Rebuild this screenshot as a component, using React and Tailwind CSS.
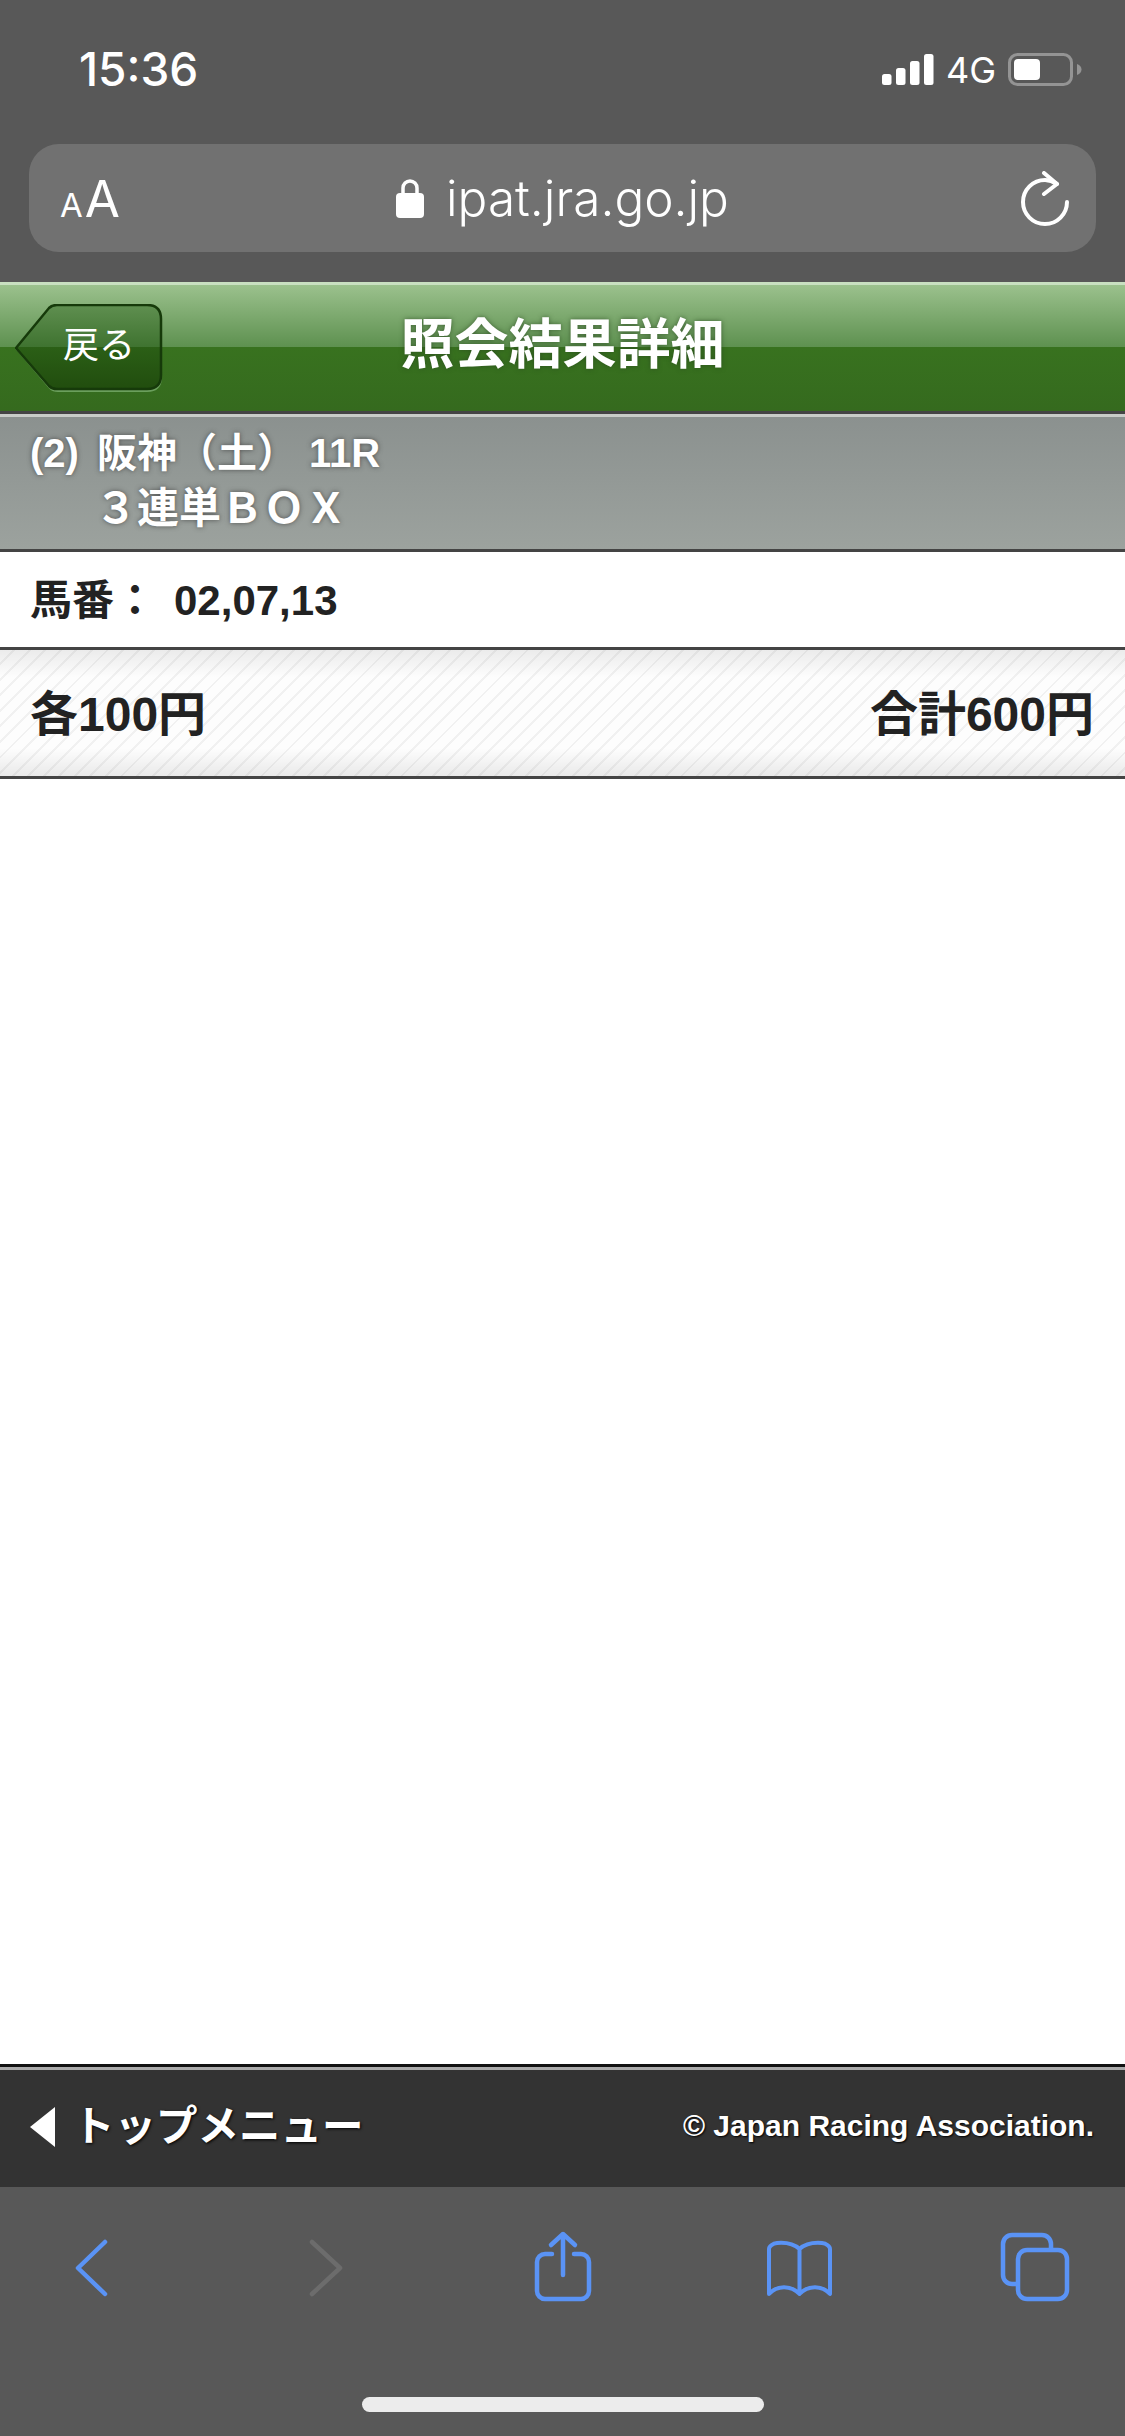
const jpFont = "font-['Liberation_Sans','Noto_Sans_CJK_JP',sans-serif]";

const SignalIcon = () => (
  <svg width="52" height="32" viewBox="0 0 52 32" fill="#fff">
    <rect x="0" y="20" width="9.500" height="11" rx="2.500" />
    <rect x="14" y="14" width="9.500" height="17" rx="2.500" />
    <rect x="28" y="7" width="9.500" height="24" rx="2.500" />
    <rect x="42" y="0" width="9.500" height="31" rx="2.500" />
  </svg>
);

const BatteryIcon = () => (
  <svg width="74" height="34" viewBox="0 0 74 34" fill="none">
    <rect x="1.500" y="1.500" width="62" height="30" rx="8" stroke="#949494" strokeWidth="3" />
    <rect x="6" y="6" width="26" height="21" rx="4" fill="#fff" />
    <path d="M69 11c3 1 4.500 3 4.500 5.500S72 21 69 22z" fill="#949494" />
  </svg>
);

const ReloadIcon = () => (
  <svg width="48" height="56" viewBox="0 0 48 56" fill="none" stroke="#fff" strokeWidth="4" strokeLinecap="round" strokeLinejoin="round">
    <path d="M46 31a22 22 0 1 1-22-22q6 0 12 4" />
    <path d="M23 2L36 13L23 23" />
  </svg>
);

const BackShape = () => (
  <svg className="absolute left-0 top-0" width="150" height="92" viewBox="0 0 150 92">
    <defs>
      <linearGradient id="backFill" x1="0" y1="0" x2="0" y2="1">
        <stop offset="0" stopColor="#5f8f50" />
        <stop offset="0.5" stopColor="#3f7330" />
        <stop offset="0.5" stopColor="#2b5f16" />
        <stop offset="1" stopColor="#214d0e" />
      </linearGradient>
    </defs>
    <path d="M1 46L35 6Q38 3 43 3H132Q146 3 146 17V73Q146 87 132 87H43Q38 87 35 84L1 44" fill="none" stroke="#6b9f5c" strokeWidth="2" />
    <path d="M1 44L34 4Q37 1 42 1H132Q146 1 146 15V71Q146 85 132 85H42Q37 85 34 82Z" fill="url(#backFill)" stroke="#163a0a" strokeWidth="2.500" />
  </svg>
);

const BLUE = "#5a93f5";

const ToolbarIcons = () => (
  <div className="flex justify-between px-[50px] pt-[40px]">
    <svg width="80" height="80" viewBox="0 0 80 80" fill="none" stroke={BLUE} strokeWidth="4.500" strokeLinecap="round" strokeLinejoin="round">
      <path d="M55 15L28 41L55 67" />
    </svg>
    <svg width="80" height="80" viewBox="0 0 80 80" fill="none" stroke="#6c6c6c" strokeWidth="4.500" strokeLinecap="round" strokeLinejoin="round">
      <path d="M26 15L54 41L26 67" />
    </svg>
    <svg width="80" height="80" viewBox="0 0 80 80" fill="none" stroke={BLUE} strokeWidth="4.500" strokeLinecap="round" strokeLinejoin="round">
      <path d="M29 27H22a8 8 0 0 0-8 8V64a8 8 0 0 0 8 8H58a8 8 0 0 0 8-8V35a8 8 0 0 0-8-8H51" />
      <path d="M40 48V7M28 18L40 7L52 18" />
    </svg>
    <svg width="80" height="80" viewBox="0 0 80 80" fill="none" stroke={BLUE} strokeWidth="4" strokeLinecap="round" strokeLinejoin="round">
      <path d="M40.500 22C34 16 24 15.500 18 16C14 16.500 10 19 10 22V67C18 58 32 58 40.500 67C49 58 63 58 71 67V22C71 19 67 16.500 63 16C57 15.500 47 16 40.500 22V67" />
    </svg>
    <svg width="80" height="80" viewBox="0 0 80 80" fill="none" stroke={BLUE} strokeWidth="4.500" strokeLinecap="round" strokeLinejoin="round">
      <path d="M21 57H17a9 9 0 0 1-9-9V17a9 9 0 0 1 9-9H47a9 9 0 0 1 9 9V21" />
      <rect x="23" y="23" width="49" height="49" rx="9" />
    </svg>
  </div>
);

export default function App() {
  return (
    <div className={`flex h-[2436px] w-[1125px] flex-col overflow-hidden bg-white ${jpFont}`}>
      {/* safari top chrome */}
      <div className="h-[282px] shrink-0 bg-[#585858] font-['Inter',sans-serif] text-white">
        <div className="flex h-[144px] items-start justify-between pl-[79px] pr-[43px] pt-[44px]">
          <span className="text-[46px] font-medium leading-[50px]">15:36</span>
          <div className="flex items-center pt-[8px]">
            <SignalIcon />
            <span className="ml-[12px] text-[36px] leading-[36px]">4G</span>
            <span className="ml-[12px]"><BatteryIcon /></span>
          </div>
        </div>
        <div className="mx-[29px] flex h-[108px] items-center justify-between rounded-[30px] bg-[#717171] pl-[31px] pr-[27px]">
          <div className="flex w-[60px] items-baseline gap-[2px]">
            <span className="text-[33px] leading-none">A</span>
            <span className="text-[51px] leading-none">A</span>
          </div>
          <div className="mr-[4px] flex items-center gap-[22px]">
            <svg width="28" height="40" viewBox="0 0 28 40" fill="#fff">
              <path d="M7 17V10a7 7 0 0 1 14 0v7" fill="none" stroke="#fff" strokeWidth="3.500" />
              <rect x="0" y="15" width="28" height="25" rx="4" />
            </svg>
            <span className="text-[49.500px] font-light leading-[60px]">ipat.jra.go.jp</span>
          </div>
          <div className="flex w-[60px] justify-end pt-[2px]"><ReloadIcon /></div>
        </div>
      </div>

      {/* title bar */}
      <div className="grid h-[132px] shrink-0 grid-cols-[1fr_auto_1fr] items-center border-t-[3px] border-b-[3px] border-t-[#c8dfc0] border-b-[#444] bg-[linear-gradient(180deg,#9bc18d_0%,#5e9150_49%,#38721f_49%,#356a1e_100%)] pl-[15px]">
        <div className="relative mt-[3px] flex h-[92px] w-[150px] items-center pb-[8px] pl-[48px]">
          <BackShape />
          <span className="relative text-[36px] leading-none text-white">戻る</span>
        </div>
        <h1 className="pr-[15px] pb-[6px] text-[54px] font-bold leading-none text-white [text-shadow:0_0_5px_rgba(40,70,30,.7)]">照会結果詳細</h1>
        <div />
      </div>

      {/* race info */}
      <div className="h-[138px] shrink-0 border-t-[3px] border-b-[3px] border-t-[#c8ccc8] border-b-[#444] bg-[linear-gradient(180deg,#8b918f,#9ca29e)] pl-[30px] pt-[8px] text-[40px] font-bold leading-[56px] text-white [text-shadow:0_0_5px_rgba(50,50,50,.7)]">
        <div className="flex">
          <span>(2)</span>
          <span className="ml-[18px]">阪神（土）</span>
          <span className="ml-[12px]">11R</span>
        </div>
        <div className="pl-[65px] text-[42px]">３連単ＢＯＸ</div>
      </div>

      {/* horse numbers */}
      <div className="flex h-[98px] shrink-0 items-center border-b-[3px] border-b-[#444] bg-white pl-[30px] pt-[2px] text-[42px] font-bold text-[#222]">
        <span>馬番：</span>
        <span className="ml-[18px]">02,07,13</span>
      </div>

      {/* amounts */}
      <div className="flex h-[129px] shrink-0 items-center justify-between border-b-[3px] border-b-[#444] bg-[linear-gradient(180deg,rgba(0,0,0,.07),rgba(0,0,0,0)_22%,rgba(0,0,0,0)_78%,rgba(0,0,0,.08)),repeating-linear-gradient(135deg,#fdfdfd_0px,#fdfdfd_9px,#f1f1f1_9px,#f1f1f1_11px)] pl-[30px] pr-[31px] pt-[3px] text-[48px] font-bold text-[#222]">
        <span>各100円</span>
        <span>合計600円</span>
      </div>

      <div className="flex-1 bg-white" />

      {/* footer */}
      <div className="flex h-[123px] shrink-0 items-center justify-between border-t-[3px] border-t-[#111] bg-[#333] pl-[30px] pr-[31px] shadow-[inset_0_3px_0_#aaa]">
        <div className="flex items-center gap-[18px]">
          <svg width="25" height="40" viewBox="0 0 25 40" fill="#fff">
            <path d="M25 0V40L0 20Z" />
          </svg>
          <span className="text-[41.500px] font-bold leading-none text-white [text-shadow:1px_1px_3px_#000]">トップメニュー</span>
        </div>
        <span className="pb-[2px] text-[30px] font-bold leading-none text-white [text-shadow:1px_1px_2px_#000]">© Japan Racing Association.</span>
      </div>

      {/* safari bottom toolbar */}
      <div className="flex h-[249px] shrink-0 flex-col justify-between bg-[#585858] pb-[24px]">
        <ToolbarIcons />
        <div className="mx-auto h-[15px] w-[402px] rounded-full bg-[#ececec]" />
      </div>
    </div>
  );
}
